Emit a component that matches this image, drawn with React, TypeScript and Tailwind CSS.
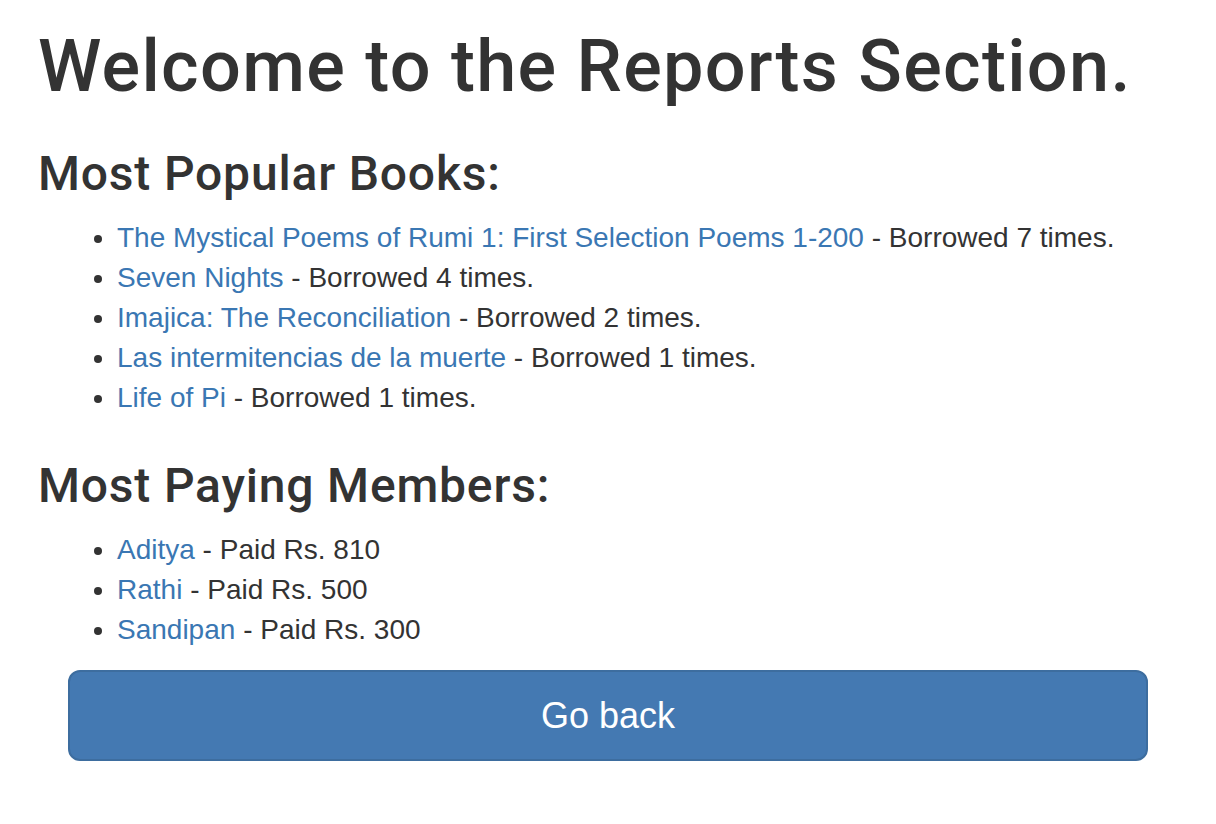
const books = [
  { title: "The Mystical Poems of Rumi 1: First Selection Poems 1-200", count: 7 },
  { title: "Seven Nights", count: 4 },
  { title: "Imajica: The Reconciliation", count: 2 },
  { title: "Las intermitencias de la muerte", count: 1 },
  { title: "Life of Pi", count: 1 },
];

const members = [
  { name: "Aditya", paid: 810 },
  { name: "Rathi", paid: 500 },
  { name: "Sandipan", paid: 300 },
];

const App = () => {
  return (
    <div className="min-h-screen bg-white px-[38px] text-[#333333] font-['Liberation_Sans',Arial,sans-serif]">
      <h1 className="pt-[27px] font-['Roboto',sans-serif] text-[72px] leading-[80px] font-medium tracking-[0.018em] whitespace-nowrap">
        Welcome to the Reports Section.
      </h1>

      <h2 className="mt-[39px] font-['Roboto',sans-serif] text-[48px] leading-[56px] font-medium tracking-[0.017em]">
        Most Popular Books:
      </h2>
      <ul className="mt-[16px] list-disc pl-[79px] text-[28px] leading-[40px]">
        {books.map((b) => (
          <li key={b.title}>
            <a href="#" className="text-[#3a77b3]">
              {b.title}
            </a>{" "}
            - Borrowed {b.count} times.
          </li>
        ))}
      </ul>

      <h2 className="mt-[40px] font-['Roboto',sans-serif] text-[48px] leading-[56px] font-medium tracking-[0.017em]">
        Most Paying Members:
      </h2>
      <ul className="mt-[16px] list-disc pl-[79px] text-[28px] leading-[40px]">
        {members.map((m) => (
          <li key={m.name}>
            <a href="#" className="text-[#3a77b3]">
              {m.name}
            </a>{" "}
            - Paid Rs. {m.paid}
          </li>
        ))}
      </ul>

      <div className="mt-[20px] px-[30px]">
        <button className="flex h-[91px] w-full items-center justify-center rounded-[12px] border-2 border-[#3d6d9f] bg-[#4479b2] text-[36px] text-white">
          Go back
        </button>
      </div>
    </div>
  );
};

export default App;
